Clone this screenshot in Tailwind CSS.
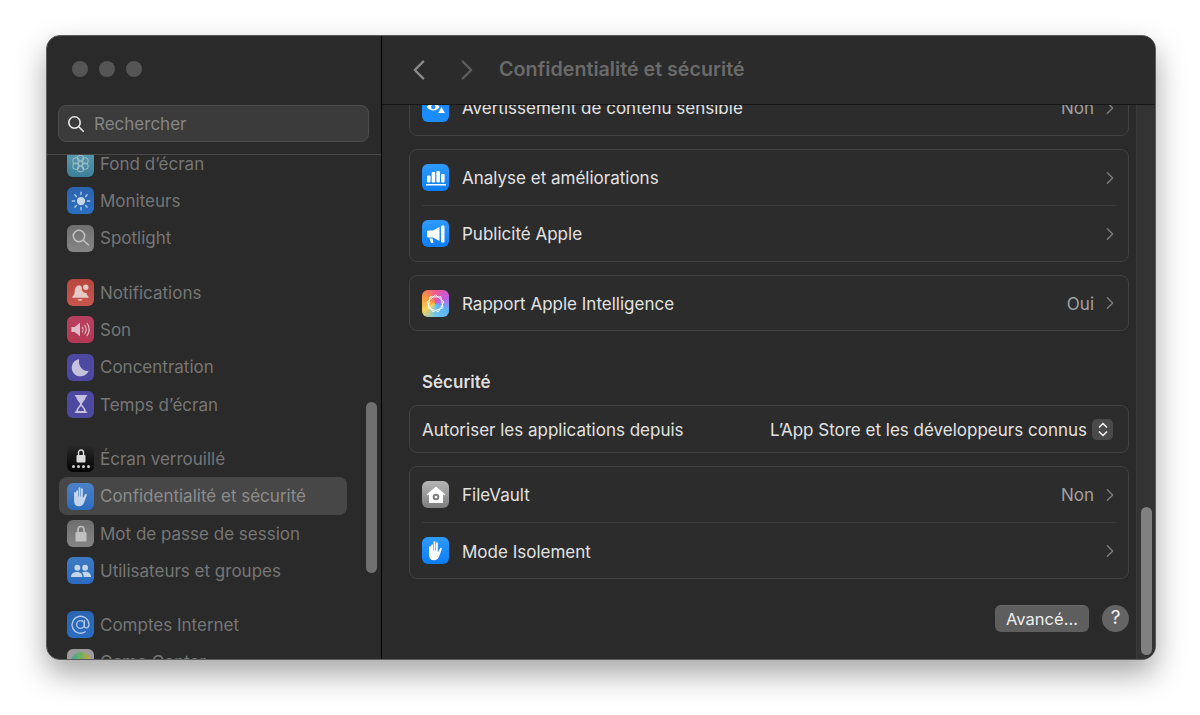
<!DOCTYPE html>
<html lang="fr">
<head>
  <meta charset="UTF-8" />
  <title>Confidentialité et sécurité</title>
  <script src="https://cdn.jsdelivr.net/npm/@tailwindcss/browser@4"></script>
</head>
<body class="bg-white h-[715px] overflow-hidden pt-[35px] pl-[46px] font-['Inter','Liberation_Sans',sans-serif]">

  <svg class="hidden">
    <symbol id="hand" viewBox="0 0 24 24">
      <path fill="#fff" d="M7.600 6.600c0-1.500 1.800-1.500 1.800 0V12h.6V3.600c0-1.600 1.900-1.600 1.900 0V12h.6V4.400c0-1.500 1.900-1.500 1.900 0V13l.5.200 1.700-3.300c.8-1.400 2.500-.7 1.900.9l-2.600 7.200c-.8 2.400-2.600 4.300-5.500 4.300-3.200 0-5.100-2-5.100-5.800V8.300c0-1.500 1.800-1.500 1.800 0Z"/>
    </symbol>
    <symbol id="chev" viewBox="0 0 10 16">
      <path d="M2 2l6 6-6 6" fill="none" stroke="currentColor" stroke-width="1.700" stroke-linecap="round" stroke-linejoin="round"/>
    </symbol>
  </svg>

  <!-- window -->
  <div class="relative flex w-[1110px] h-[625px] rounded-[14px] overflow-hidden bg-[#2a2a2a] border border-[#5c5c5c] shadow-[0_14px_30px_rgba(0,0,0,0.35)]">

    <!-- sidebar -->
    <aside class="relative flex flex-col w-[335px] shrink-0 border-r border-black">
      <div class="flex gap-[11px] pl-[25px] pt-[25px] h-[69px]">
        <span class="size-4 rounded-full bg-[#555]"></span>
        <span class="size-4 rounded-full bg-[#555]"></span>
        <span class="size-4 rounded-full bg-[#555]"></span>
      </div>
      <div class="mx-[11px] h-[37px] w-[311px] flex items-center gap-[9px] pl-[8px] rounded-lg bg-[#3b3b3b] border border-[#4d4d4d]">
        <svg class="size-[18px]" viewBox="0 0 18 18" fill="none" stroke="#e8e8e8" stroke-width="1.600" stroke-linecap="round"><circle cx="7.500" cy="7.500" r="5.700"/><path d="M11.800 11.800l4.500 4.500"/></svg>
        <span class="pt-[2px] text-[17px] text-[#858585]">Rechercher</span>
      </div>
      <div class="mt-[12px] border-t border-[#4a4a4a]"></div>

      <nav class="flex-1 overflow-hidden pl-[12px] pr-[34px] text-[17px] text-[#767676]">
        <div class="-mt-[10px]">
          <div class="flex items-center h-[37.3px] gap-[6px] pl-[8px]">
            <span class="size-[27px] rounded-[6px] bg-gradient-to-b from-[#62a9bf] to-[#3f8aa6] flex items-center justify-center opacity-90">
              <svg class="size-[21px]" viewBox="0 0 24 24" fill="none" stroke="#a9cdd9" stroke-width="1.200"><circle cx="12" cy="12" r="3"/><circle cx="12" cy="6" r="3.500"/><circle cx="12" cy="18" r="3.500"/><circle cx="6.800" cy="9" r="3.500"/><circle cx="17.200" cy="9" r="3.500"/><circle cx="6.800" cy="15" r="3.500"/><circle cx="17.200" cy="15" r="3.500"/></svg>
            </span>
            <span class="pt-[2px]">Fond d’écran</span>
          </div>
          <div class="flex items-center h-[37.3px] gap-[6px] pl-[8px]">
            <span class="size-[27px] rounded-[6px] bg-gradient-to-b from-[#2c63ae] to-[#2a6fc2] flex items-center justify-center">
              <svg class="size-[22px]" viewBox="0 0 24 24" fill="none" stroke="#b7cbe2" stroke-width="1.500" stroke-linecap="round"><circle cx="12" cy="12" r="4.500" fill="#c9d6e6" stroke="none"/><path d="M12 2.500v2.500M12 19v2.500M2.500 12H5M19 12h2.500M5.300 5.300L7 7M17 17l1.700 1.700M5.300 18.700L7 17M17 7l1.700-1.700"/></svg>
            </span>
            <span class="pt-[2px]">Moniteurs</span>
          </div>
          <div class="flex items-center h-[37.3px] gap-[6px] pl-[8px]">
            <span class="size-[27px] rounded-[6px] bg-gradient-to-b from-[#6f6f6f] to-[#868686] flex items-center justify-center">
              <svg class="size-[20px]" viewBox="0 0 20 20" fill="none" stroke="#c4c4c4" stroke-width="1.500" stroke-linecap="round"><circle cx="8" cy="8" r="5.700"/><path d="M12.500 12.500l5 4.500"/></svg>
            </span>
            <span class="pt-[2px]">Spotlight</span>
          </div>
        </div>

        <div class="mt-[17px]">
          <div class="flex items-center h-[37.3px] gap-[6px] pl-[8px]">
            <span class="size-[27px] rounded-[6px] bg-gradient-to-b from-[#b7473f] to-[#c8564d] flex items-center justify-center">
              <svg class="size-[23px]" viewBox="0 0 24 24" fill="#e6c9c6"><path d="M11 4.500c-3.500.3-5 3-5 6 0 3-1.300 4.500-2.500 6v1h17v-1c-1-1.100-1.800-2.300-2.200-4-3 .3-5.500-2.300-4.800-5.200-.6-1.300-1.400-2.800-2.500-2.800Z"/><circle cx="17.500" cy="6.500" r="2.800"/><path d="M9 19h5c0 2.300-5 2.300-5 0Z"/></svg>
            </span>
            <span class="pt-[2px]">Notifications</span>
          </div>
          <div class="flex items-center h-[37.3px] gap-[6px] pl-[8px]">
            <span class="size-[27px] rounded-[6px] bg-gradient-to-b from-[#b8405f] to-[#b33854] flex items-center justify-center">
              <svg class="size-[23px]" viewBox="0 0 24 24" fill="none" stroke="#e0bcc6" stroke-width="1.200" stroke-linecap="round"><path fill="#e0bcc6" stroke="none" d="M2.500 9.500h3.500L11.500 5v14L6 14.500H2.500Z"/><path d="M14 9.500c1 1.500 1 3.500 0 5M16.500 7.500c1.700 2.800 1.700 6.200 0 9M19 5.500c2.500 4 2.500 9 0 13"/></svg>
            </span>
            <span class="pt-[2px]">Son</span>
          </div>
          <div class="flex items-center h-[37.3px] gap-[6px] pl-[8px]">
            <span class="size-[27px] rounded-[6px] bg-[#4d49a0] flex items-center justify-center">
              <svg class="size-[21px]" viewBox="0 0 24 24" fill="#c5c2de"><path d="M10.500 2.500C5.500 3.200 2 7.300 2 12.200 2 17.800 6.500 22 12 22c4.200 0 7.800-2.500 9.300-6.300-6 1.300-12.500-5.200-10.800-13.200Z"/></svg>
            </span>
            <span class="pt-[2px]">Concentration</span>
          </div>
          <div class="flex items-center h-[37.3px] gap-[6px] pl-[8px]">
            <span class="size-[27px] rounded-[6px] bg-[#4d49a0] flex items-center justify-center">
              <svg class="size-[22px]" viewBox="0 0 24 24" fill="none" stroke="#c5c2de" stroke-width="1.800" stroke-linecap="round" stroke-linejoin="round"><path d="M6 3h12M6 21h12"/><path fill="#c5c2de" d="M7.500 3.500c0 5 4.500 6 4.500 8.500 0-2.500 4.500-3.500 4.500-8.500Z"/><path d="M7.500 20.500c0-5 4.500-6 4.500-8.500 0 2.500 4.500 3.500 4.500 8.500Z"/></svg>
            </span>
            <span class="pt-[2px]">Temps d’écran</span>
          </div>
        </div>

        <div class="mt-[17px]">
          <div class="flex items-center h-[37.3px] gap-[6px] pl-[8px]">
            <span class="size-[27px] rounded-[6px] bg-gradient-to-b from-[#2a2a2a] to-[#050505] flex flex-col items-center justify-center gap-[2px]">
              <svg class="w-[10px] h-[14px]" viewBox="0 0 10 14"><path d="M2.500 6V3.500a2.500 2.500 0 0 1 5 0V6" fill="none" stroke="#dcdcdc" stroke-width="1.400"/><rect x="0.500" y="6" width="9" height="7.500" rx="1" fill="#dcdcdc"/></svg>
              <span class="flex gap-[2px]"><i class="size-[3px] rounded-full bg-[#cfcfcf]"></i><i class="size-[3px] rounded-full bg-[#cfcfcf]"></i><i class="size-[3px] rounded-full bg-[#cfcfcf]"></i><i class="size-[3px] rounded-full bg-[#cfcfcf]"></i></span>
            </span>
            <span class="pt-[2px]">Écran verrouillé</span>
          </div>
          <div class="flex items-center h-[37.3px] gap-[6px] pl-[8px] rounded-lg bg-[#474747] text-[#8c8c8c]">
            <span class="size-[27px] rounded-[6px] bg-gradient-to-b from-[#4c82c8] to-[#2c6cbd] flex items-center justify-center">
              <svg class="size-[23px] opacity-70"><use href="#hand"/></svg>
            </span>
            <span class="pt-[2px]">Confidentialité et sécurité</span>
          </div>
          <div class="flex items-center h-[37.3px] gap-[6px] pl-[8px]">
            <span class="size-[27px] rounded-[6px] bg-gradient-to-b from-[#6e6e6e] to-[#858585] flex items-center justify-center">
              <svg class="w-[12px] h-[17px]" viewBox="0 0 12 17"><path d="M3 7.500V4.500a3 3 0 0 1 6 0v3" fill="none" stroke="#c0c0c0" stroke-width="1.600"/><rect x="0.500" y="7" width="11" height="9.500" rx="1.200" fill="#c0c0c0"/></svg>
            </span>
            <span class="pt-[2px]">Mot de passe de session</span>
          </div>
          <div class="flex items-center h-[37.3px] gap-[6px] pl-[8px]">
            <span class="size-[27px] rounded-[6px] bg-gradient-to-b from-[#3e79c4] to-[#2a6cc0] flex items-center justify-center">
              <svg class="size-[22px]" viewBox="0 0 24 24" fill="#c5d5e8"><circle cx="8" cy="8.500" r="3.200"/><circle cx="16.500" cy="8.500" r="3.200"/><path d="M1 18.500c0-3.500 3-5.500 6.500-5.500 3.300 0 6 2 6 5.500Z"/><path d="M15 18.500c0-2-.6-3.700-2-5 1-.5 2.200-.7 3.500-.7 3.500 0 6.500 2 6.500 5.700Z"/></svg>
            </span>
            <span class="pt-[2px]">Utilisateurs et groupes</span>
          </div>
        </div>

        <div class="mt-[17px]">
          <div class="flex items-center h-[37.3px] gap-[6px] pl-[8px]">
            <span class="size-[27px] rounded-[6px] bg-gradient-to-b from-[#2a66b4] to-[#2a6cc0] flex items-center justify-center">
              <svg class="size-[23px]" viewBox="0 0 24 24" fill="none" stroke="#b3c8e2" stroke-width="1.400" stroke-linecap="round"><circle cx="12" cy="12" r="4"/><path d="M16 8v5.500c0 3 4.800 3 4.800-1.500A8.800 8.800 0 1 0 17 19.500"/></svg>
            </span>
            <span class="pt-[2px]">Comptes Internet</span>
          </div>
          <div class="flex items-center h-[37.3px] gap-[6px] pl-[8px]">
            <span class="size-[27px] rounded-[6px] bg-[#9c9c9c] flex items-center justify-center overflow-hidden">
              <span class="size-[20px] rounded-full bg-gradient-to-r from-[#3aa7a0] via-[#6fae5a] to-[#c9a43d]"></span>
            </span>
            <span class="pt-[2px]">Game Center</span>
          </div>
        </div>
      </nav>

      <div class="absolute left-[319px] top-[366px] w-[11px] h-[171px] rounded-full bg-[#707070]"></div>
    </aside>

    <!-- main -->
    <main class="flex-1 min-w-0 flex flex-col">
      <header class="flex items-center h-[69px] pb-[1px] shrink-0 border-b border-[#161616] bg-[#2b2b2b] text-[#6a6a6a]">
        <svg class="w-[14px] h-[24px] ml-[30px] -scale-x-100 text-[#8a8a8a]"><use href="#chev"/></svg>
        <svg class="w-[14px] h-[24px] ml-[34px] text-[#5c5c5c]"><use href="#chev"/></svg>
        <h1 class="ml-[25px] text-[19.7px] font-semibold">Confidentialité et sécurité</h1>
      </header>

      <div class="relative flex-1 flex overflow-hidden">
        <div class="flex-1 min-w-0 pl-[27px] pr-[7px] text-[17px] text-[#e2e2e2]">

          <div class="-mt-[25px] rounded-lg border border-[#424242] bg-[#2c2c2c]">
            <div class="flex items-center h-[54px] pl-[12px] pr-[13px]">
              <span class="size-[27px] rounded-[6px] bg-[#1a8cff] flex items-center justify-center">
                <svg class="size-[22px]" viewBox="0 0 24 24" fill="#fff"><path d="M2 11c3-5 11-5 14 0-3 5-11 5-14 0Z"/><circle cx="9" cy="11" r="2.400" fill="#1a8cff"/><path d="M18 10l4.500 8h-9Z" stroke="#1a8cff"/></svg>
              </span>
              <span class="pt-[2px] ml-[13px]">Avertissement de contenu sensible</span>
              <span class="pt-[2px] ml-auto text-[#a0a0a0]">Non</span>
              <svg class="w-[10px] h-[14px] ml-[11px] text-[#7d7d7d]"><use href="#chev"/></svg>
            </div>
          </div>

          <div class="mt-[13px] rounded-lg border border-[#424242] bg-[#2c2c2c]">
            <div class="flex items-center h-[55px] pl-[12px] pr-[13px]">
              <span class="size-[27px] rounded-[6px] bg-gradient-to-b from-[#2d9bff] to-[#0a7df5] flex items-center justify-center">
                <svg class="size-[22px]" viewBox="0 0 22 22" fill="#fff"><rect x="2" y="8.500" width="3.500" height="7" rx="1"/><rect x="6.700" y="5" width="3.500" height="10.500" rx="1"/><rect x="11.400" y="4" width="3.500" height="11.500" rx="1"/><rect x="16.100" y="7" width="3.500" height="8.500" rx="1"/><rect x="1" y="17" width="20" height="1.500"/></svg>
              </span>
              <span class="pt-[2px] ml-[13px]">Analyse et améliorations</span>
              <svg class="w-[10px] h-[14px] ml-auto text-[#7d7d7d]"><use href="#chev"/></svg>
            </div>
            <div class="mx-[12px] border-t border-[#3b3b3b]"></div>
            <div class="flex items-center h-[55px] pl-[12px] pr-[13px]">
              <span class="size-[27px] rounded-[6px] bg-gradient-to-b from-[#2d9bff] to-[#0a7df5] flex items-center justify-center">
                <svg class="size-[22px]" viewBox="0 0 22 22" fill="#fff"><path d="M2 9c0-1 .6-1.500 1.500-1.500H8L14.500 4v14L8 14.500H3.500C2.600 14.500 2 14 2 13Z"/><rect x="16" y="2.500" width="3.500" height="17" rx="1.200"/><path d="M4.500 15.500h3l1 4.500h-2.500Z"/></svg>
              </span>
              <span class="pt-[3px] ml-[13px]">Publicité Apple</span>
              <svg class="w-[10px] h-[14px] ml-auto text-[#7d7d7d]"><use href="#chev"/></svg>
            </div>
          </div>

          <div class="mt-[13px] rounded-lg border border-[#424242] bg-[#2c2c2c]">
            <div class="flex items-center h-[54px] pl-[12px] pr-[13px]">
              <span class="size-[27px] rounded-[6px] bg-[conic-gradient(from_0deg,#f0568f,#c45be0,#5ab4f5,#6cc5f0,#f5d25a,#f79a3a,#f0568f)] flex items-center justify-center">
                <svg class="size-[23px]" viewBox="0 0 24 24" fill="none" stroke="#fff" stroke-width="1" stroke-linejoin="round"><path d="M12 3L20.860 10.440 15.080 20.460 4.210 16.500 6.210 5.110 17.790 5.110 19.790 16.500 8.920 20.460 3.140 10.440Z"/></svg>
              </span>
              <span class="pt-[3px] ml-[13px]">Rapport Apple Intelligence</span>
              <span class="pt-[3px] ml-auto text-[#a0a0a0]">Oui</span>
              <svg class="w-[10px] h-[14px] ml-[11px] text-[#7d7d7d]"><use href="#chev"/></svg>
            </div>
          </div>

          <h2 class="mt-[40px] ml-[13px] h-[22px] leading-[22px] font-semibold text-[#dedede]">Sécurité</h2>

          <div class="mt-[12px] rounded-lg border border-[#424242] bg-[#2c2c2c]">
            <div class="flex items-center h-[46px] pl-[12px] pr-[15px]">
              <span class="pt-[4px]">Autoriser les applications depuis</span>
              <span class="pt-[4px] ml-auto">L’App Store et les développeurs connus</span>
              <span class="ml-[5px] w-[21px] h-[21px] rounded-[5px] bg-[#4a4a4a] flex items-center justify-center">
                <svg class="w-[12px] h-[17px]" viewBox="0 0 12 17" fill="none" stroke="#e8e8e8" stroke-width="1.700" stroke-linecap="round" stroke-linejoin="round"><path d="M2.500 6L6 2.500 9.500 6M2.500 11L6 14.500 9.500 11"/></svg>
              </span>
            </div>
          </div>

          <div class="mt-[13px] rounded-lg border border-[#424242] bg-[#2c2c2c]">
            <div class="flex items-center h-[55px] pl-[12px] pr-[13px]">
              <span class="size-[27px] rounded-[6px] bg-gradient-to-b from-[#b5b5b5] to-[#7e7e7e] flex items-center justify-center">
                <svg class="size-[22px]" viewBox="0 0 22 22"><path fill="#fff" d="M11 2.500L1.500 10.500l1 1.100L4 10.400V19h14v-8.600l1.500 1.200 1-1.100Z"/><circle cx="11" cy="13" r="3.300" fill="#7e7e7e"/><circle cx="11" cy="13" r="1.300" fill="#fff"/></svg>
              </span>
              <span class="pt-[3px] ml-[13px]">FileVault</span>
              <span class="pt-[3px] ml-auto text-[#a0a0a0]">Non</span>
              <svg class="w-[10px] h-[14px] ml-[11px] text-[#7d7d7d]"><use href="#chev"/></svg>
            </div>
            <div class="mx-[12px] border-t border-[#3b3b3b]"></div>
            <div class="flex items-center h-[55px] pl-[12px] pr-[13px]">
              <span class="size-[27px] rounded-[6px] bg-gradient-to-b from-[#2d9bff] to-[#0a7df5] flex items-center justify-center">
                <svg class="size-[23px]"><use href="#hand"/></svg>
              </span>
              <span class="pt-[4px] ml-[13px]">Mode Isolement</span>
              <svg class="w-[10px] h-[14px] ml-auto text-[#7d7d7d]"><use href="#chev"/></svg>
            </div>
          </div>

          <div class="mt-[26px] flex items-center justify-end gap-[13px]">
            <button class="w-[94px] h-[27px] rounded-[6px] bg-[#5e5e5e] border-t border-[#6b6b6b] text-[16.500px] leading-[24px] text-[#eeeeee]">Avancé…</button>
            <button class="size-[27px] rounded-full bg-[#646464] text-[19px] text-[#eeeeee] flex items-center justify-center">?</button>
          </div>
        </div>

        <!-- scroll track -->
        <div class="relative w-[19px] shrink-0 bg-[#333333] border-l border-[#3a3a3a]">
          <div class="absolute right-[3px] top-[402px] w-[11px] h-[148px] rounded-full bg-[#808080]"></div>
        </div>
      </div>
    </main>
  </div>
</body>
</html>
